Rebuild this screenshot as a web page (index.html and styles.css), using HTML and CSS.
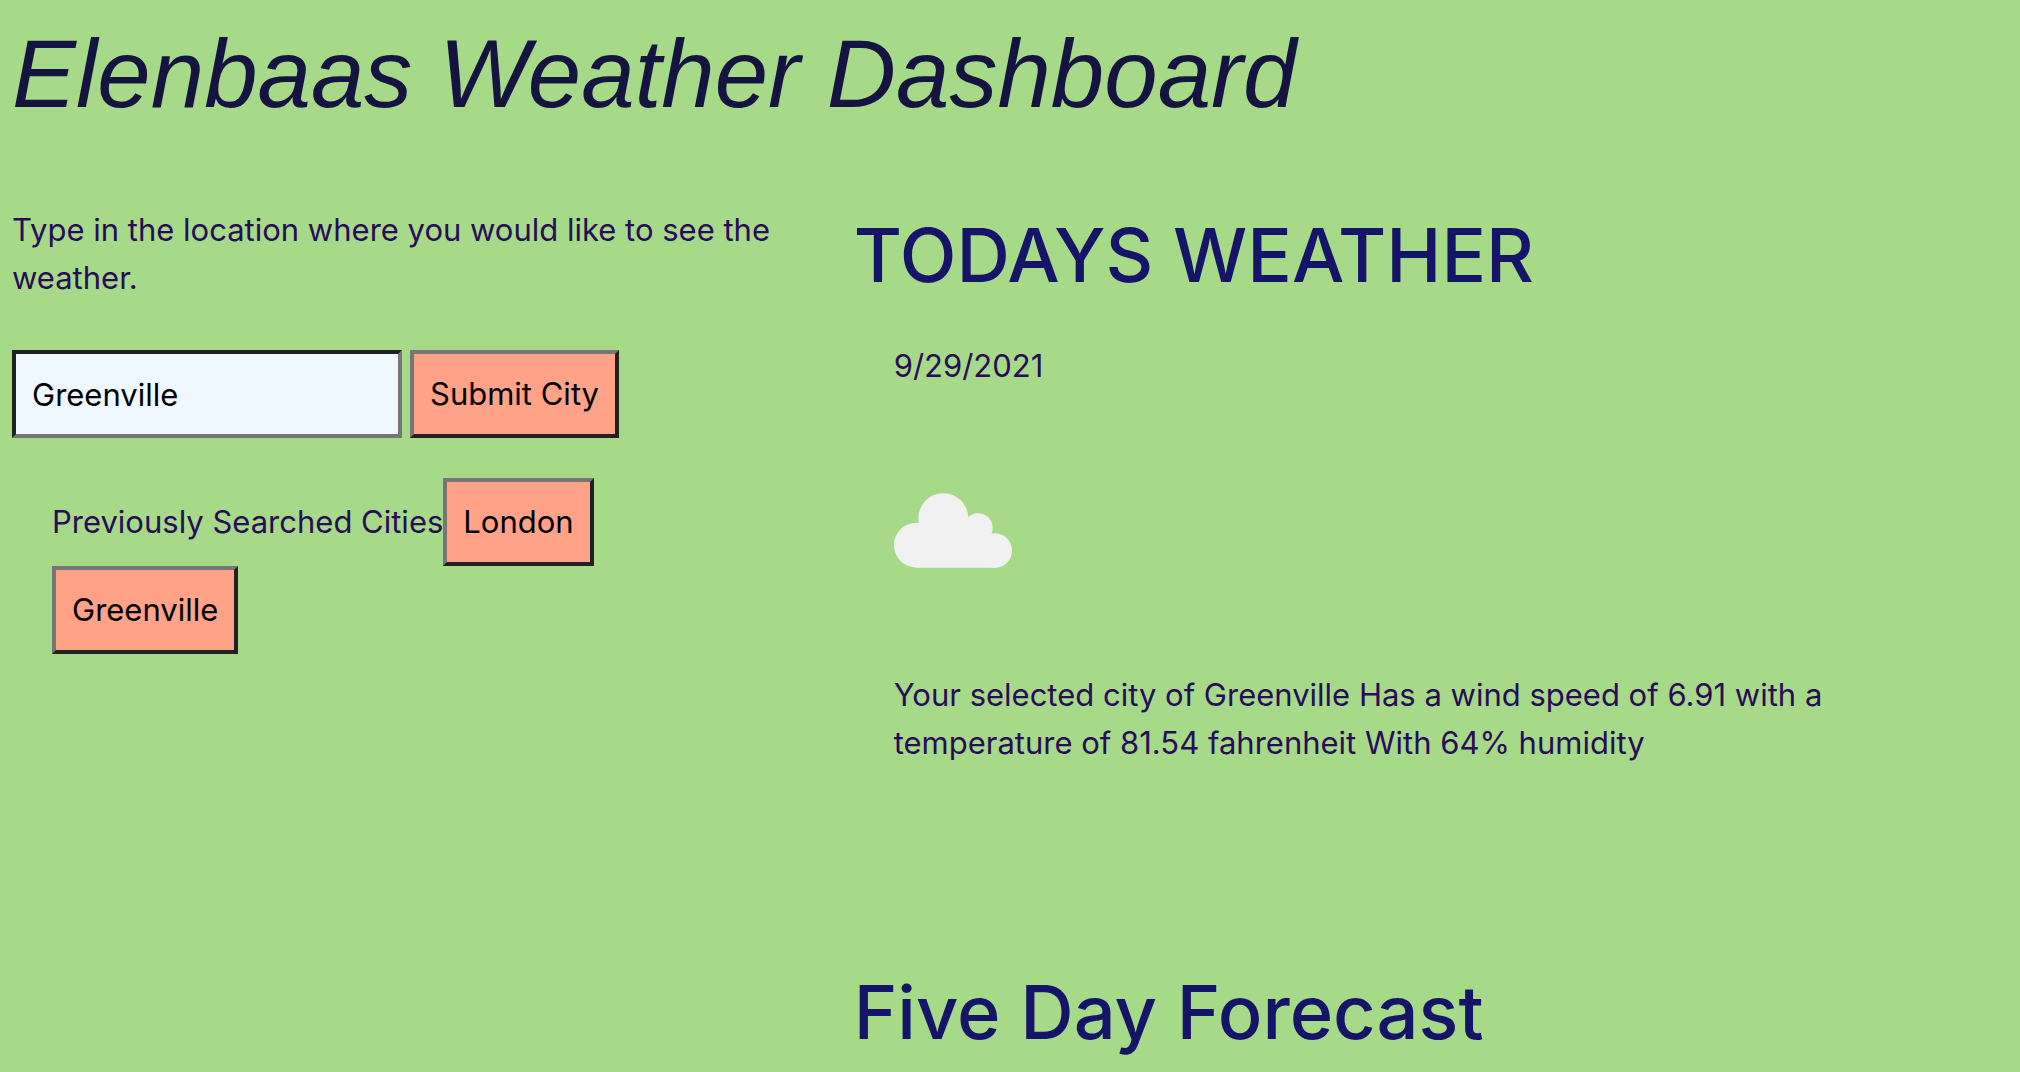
FILE: index.html
```html
<!DOCTYPE html>
<html lang="en">
<head>
<meta charset="utf-8">
<meta name="viewport" content="width=device-width, initial-scale=1">
<title>Elenbaas Weather Dashboard</title>
<link rel="stylesheet" href="styles.css">
</head>
<body>
<header class="site-header">
  <h1 class="site-title">Elenbaas Weather Dashboard</h1>
</header>
<main class="dashboard">
  <section class="search">
    <form class="search-form">
      <label class="search-label" for="city">Type in the location where you would like to see the weather.</label>
      <div class="search-row">
        <input class="city-input" id="city" type="text" value="Greenville">
        <button class="city-button" type="button">Submit City</button>
      </div>
    </form>
    <div class="history">
      <span class="history-label">Previously Searched Cities</span>
      <button class="city-button" type="button">London</button>
      <button class="city-button" type="button">Greenville</button>
    </div>
  </section>
  <section class="weather">
    <h2 class="section-title">TODAYS WEATHER</h2>
    <div class="today">
      <p class="date">9/29/2021</p>
      <svg class="cloud" viewBox="102 71 354 224" role="img" aria-label="Cloudy">
        <circle cx="169" cy="227" r="67"/>
        <circle cx="250" cy="146" r="75"/>
        <circle cx="354" cy="175" r="44"/>
        <circle cx="404" cy="243" r="52"/>
        <path d="M169 200L250 140L354 170L404 243V295H169Z"/>
      </svg>
      <p class="summary">Your selected city of Greenville Has a wind speed of 6.91 with a temperature of 81.54 fahrenheit With 64% humidity</p>
    </div>
    <h2 class="section-title">Five Day Forecast</h2>
  </section>
</main>
</body>
</html>
```
FILE: styles.css
```css
* {
  box-sizing: border-box;
}

body {
  margin: 0;
  background: #a6da89;
  color: #290c58;
  font-family: Inter, "Liberation Sans", sans-serif;
  font-size: 31px;
  line-height: 48px;
}

.site-header {
  padding: 14px 12px 72px;
}

.site-title {
  margin: 0;
  color: #15133f;
  font-family: "Liberation Sans", sans-serif;
  font-size: 96px;
  font-style: italic;
  font-weight: 400;
  line-height: 120px;
}

.dashboard {
  display: grid;
  grid-template-columns: 5fr 7fr;
}

.search,
.weather {
  min-width: 0;
  padding: 0 12px;
}

.search-label {
  display: block;
  margin-bottom: 48px;
}

.search-row {
  display: flex;
  gap: 8px;
}

.city-input,
.city-button {
  padding: 16px;
  border: 4px solid;
  border-color: #767676 #212121 #212121 #767676;
  border-radius: 0;
  background: #ffa287;
  color: #000;
  font: inherit;
}

.city-input {
  width: 390px;
  height: 88px;
  border-color: #212121 #767676 #767676 #212121;
  background: #f0f8ff;
}

.history {
  display: flex;
  flex-wrap: wrap;
  align-items: center;
  max-width: 680px;
  margin-top: 40px;
  padding-left: 40px;
}

.section-title {
  margin: 0;
  color: #151468;
  font-size: 74px;
  font-weight: 500;
  line-height: 98px;
}

.today {
  padding: 38px 120px 196px 40px;
}

.date,
.summary {
  margin: 0;
}

.cloud {
  display: block;
  width: 118px;
  height: 75px;
  margin: 103px 0;
  fill: #f1f1f1;
}
```
